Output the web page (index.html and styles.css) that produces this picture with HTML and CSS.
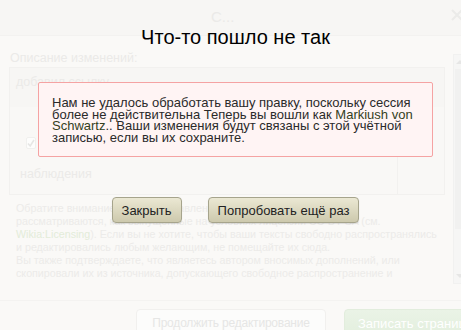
FILE: index.html
```html
<!DOCTYPE html>
<html lang="ru">
<head>
<meta charset="utf-8">
<title>Что-то пошло не так</title>
<link rel="stylesheet" href="styles.css">
</head>
<body>
<div class="dialog">
  <div class="dlg-head">
    <span class="dlg-title">С...</span>
    <svg class="dlg-close" width="12" height="12" viewBox="0 0 12 12"><path d="M1 1L11 11M11 1L1 11" stroke="#ebebe9" stroke-width="2.2"/></svg>
  </div>
  <div class="scroll">
    <div class="form">
      <div class="label">Описание изменений:</div>
      <div class="box">
        <div class="summary">добавил ссылку</div>
        <div class="box-lower">
          <div class="opts">
            <svg class="cb" width="10" height="12" viewBox="0 0 10 12"><rect x="0.5" y="0.5" width="9" height="11" rx="1.5" fill="#fdfdfc" stroke="#f0f0ee"/><path d="M2 6.5L4.2 9L8 3" fill="none" stroke="#e6e6e4" stroke-width="1.6"/></svg>
            <div class="watch">наблюдения</div>
          </div>
          <div class="side"></div>
        </div>
      </div>
      <div class="notes">
        <p>Обратите внимание, что все добавления и изменения текста статьи<br>рассматриваются, как выпущенные на условиях лицензии CC-BY-SA (см.<br><span class="lnk">Wikia:Licensing</span>). Если вы не хотите, чтобы ваши тексты свободно распространялись<br>и редактировались любым желающим, не помещайте их сюда.</p>
        <p>Вы также подтверждаете, что являетесь автором вносимых дополнений, или<br>скопировали их из источника, допускающего свободное распространение и</p>
      </div>
    </div>
    <div class="sbar">
      <div class="arr arr-up"></div>
      <div class="thumb"></div>
      <div class="track"></div>
      <div class="arr arr-down"></div>
    </div>
  </div>
  <div class="dlg-foot">
    <button class="btn-continue">Продолжить редактирование</button>
    <button class="btn-save">Записать страницу</button>
  </div>
</div>

<div class="overlay">
  <h1 class="err-title">Что-то пошло не так</h1>
  <div class="err-box">Нам не удалось обработать вашу правку, поскольку сессия более не действительна Теперь вы вошли как <span class="user">Markiush von Schwartz</span>.. Ваши изменения будут связаны с этой учётной записью, если вы их сохраните.</div>
  <div class="err-actions">
    <button class="ebtn">Закрыть</button>
    <button class="ebtn">Попробовать ещё раз</button>
  </div>
</div>
</body>
</html>
```

FILE: styles.css
```css
html, body {
  margin: 0;
  padding: 0;
}
body {
  width: 461px;
  height: 330px;
  overflow: hidden;
  position: relative;
  background: #faf9f7;
  font-family: "Liberation Sans", Arial, sans-serif;
}
.dialog {
  width: 520px;
  height: 330px;
  display: flex;
  flex-direction: column;
  background: #faf9f7;
}
.dlg-head {
  height: 35px;
  flex: none;
  background: #f7f6f4;
  border-bottom: 1px solid #f3f2f0;
  display: flex;
  align-items: center;
}
.dlg-title {
  margin-left: 211px;
  margin-top: -2px;
  font-size: 15px;
  color: #ebeae8;
}
.dlg-close {
  margin-left: auto;
  margin-right: 57px;
  margin-top: -6px;
}
.scroll {
  height: 264px;
  flex: none;
  display: flex;
}
.form {
  width: 436px;
  padding: 14px 8px 0 9px;
  overflow: hidden;
}
.label {
  font-size: 12.5px;
  line-height: 16px;
  color: #ebeae8;
  padding-left: 1px;
}
.box {
  margin-top: 1px;
  height: 126px;
  border: 1px solid #f2f1ef;
  background: #f7f6f4;
  display: flex;
  flex-direction: column;
}
.summary {
  font-size: 12.5px;
  line-height: 16px;
  color: #ebeae8;
  padding: 6px 6px 0;
  height: 27px;
}
.box-lower {
  flex: 1;
  display: flex;
  margin-top: 6px;
}
.opts {
  flex: 1;
  display: flex;
  flex-direction: column;
  padding: 30px 0 0 16px;
  background: #f9f8f6;
}
.cb {
  display: block;
}
.watch {
  margin: 17px 0 0 -6px;
  font-size: 12.5px;
  line-height: 16px;
  color: #ebeae8;
}
.side {
  width: 46px;
  border-left: 1px solid #f2f1ef;
  background: #f9f8f6;
}
.notes {
  margin-top: 7px;
  padding-left: 7px;
  font-size: 10.7px;
  line-height: 13px;
  color: #ecebe9;
  white-space: nowrap;
}
.notes p {
  margin: 0;
}
.lnk {
  color: #e3ecd9;
}
.sbar {
  width: 17px;
  margin-top: 18px;
  margin-bottom: 16px;
  display: flex;
  flex-direction: column;
  background: #f6f6f5;
  border: 1px solid #f1f1f0;
}
.arr {
  height: 14px;
  flex: none;
  position: relative;
}
.arr-up::after, .arr-down::after {
  content: "";
  position: absolute;
  left: 2px;
  top: 5px;
  border-left: 4px solid transparent;
  border-right: 4px solid transparent;
}
.arr-up::after {
  border-bottom: 4px solid #e6e6e5;
}
.arr-down::after {
  border-top: 4px solid #e6e6e5;
}
.thumb {
  height: 160px;
  flex: none;
  background: #f1f1f0;
  margin: 0 1px;
}
.track {
  flex: 1;
}
.dlg-foot {
  flex: 1;
  border-top: 1px solid #f4f3f1;
  display: flex;
  align-items: flex-start;
  gap: 18px;
  padding: 8px 0 0 136px;
}
.dlg-foot button {
  font-family: "Liberation Sans", Arial, sans-serif;
  font-size: 12px;
  letter-spacing: -0.2px;
  height: 28px;
  border-radius: 4px;
  padding: 0 12px;
  flex: none;
  white-space: nowrap;
}
.btn-continue {
  width: 190px;
  color: #e6e6e5;
  background: #fcfcfb;
  border: 1px solid #f1f0ee;
}
.dlg-foot .btn-save {
  font-size: 13px;
  letter-spacing: 0;
  padding: 0 13px;
  color: #ffffff;
  background: linear-gradient(#eaf3e6, #e3efde);
  border: 1px solid #e2eddd;
}

/* modal error */
.overlay {
  position: absolute;
  inset: 0;
  display: flex;
  flex-direction: column;
  align-items: center;
  padding-left: 10px;
}
.err-title {
  margin: 0;
  padding-top: 26px;
  font-size: 20px;
  line-height: 23px;
  font-weight: normal;
  color: #000;
}
.err-box {
  margin-top: 33px;
  width: 395px;
  box-sizing: border-box;
  padding: 14px 13px 13px;
  border: 1px solid #f5a3a3;
  border-radius: 2px;
  background: #fff4f4;
  font-size: 13px;
  line-height: 11.5px;
  color: #2a2a2a;
}
.user {
  color: #34401c;
}
.err-actions {
  margin-top: 40px;
  display: flex;
  gap: 26px;
}
.ebtn {
  height: 26px;
  padding: 0 9px;
  font-family: "Liberation Sans", Arial, sans-serif;
  font-size: 13px;
  color: #222;
  border: 1px solid #a6a48c;
  border-radius: 4px;
  background: linear-gradient(#ebe8d3, #cdc9ad);
  box-shadow: 0 1px 1px rgba(0,0,0,0.12);
}
```
